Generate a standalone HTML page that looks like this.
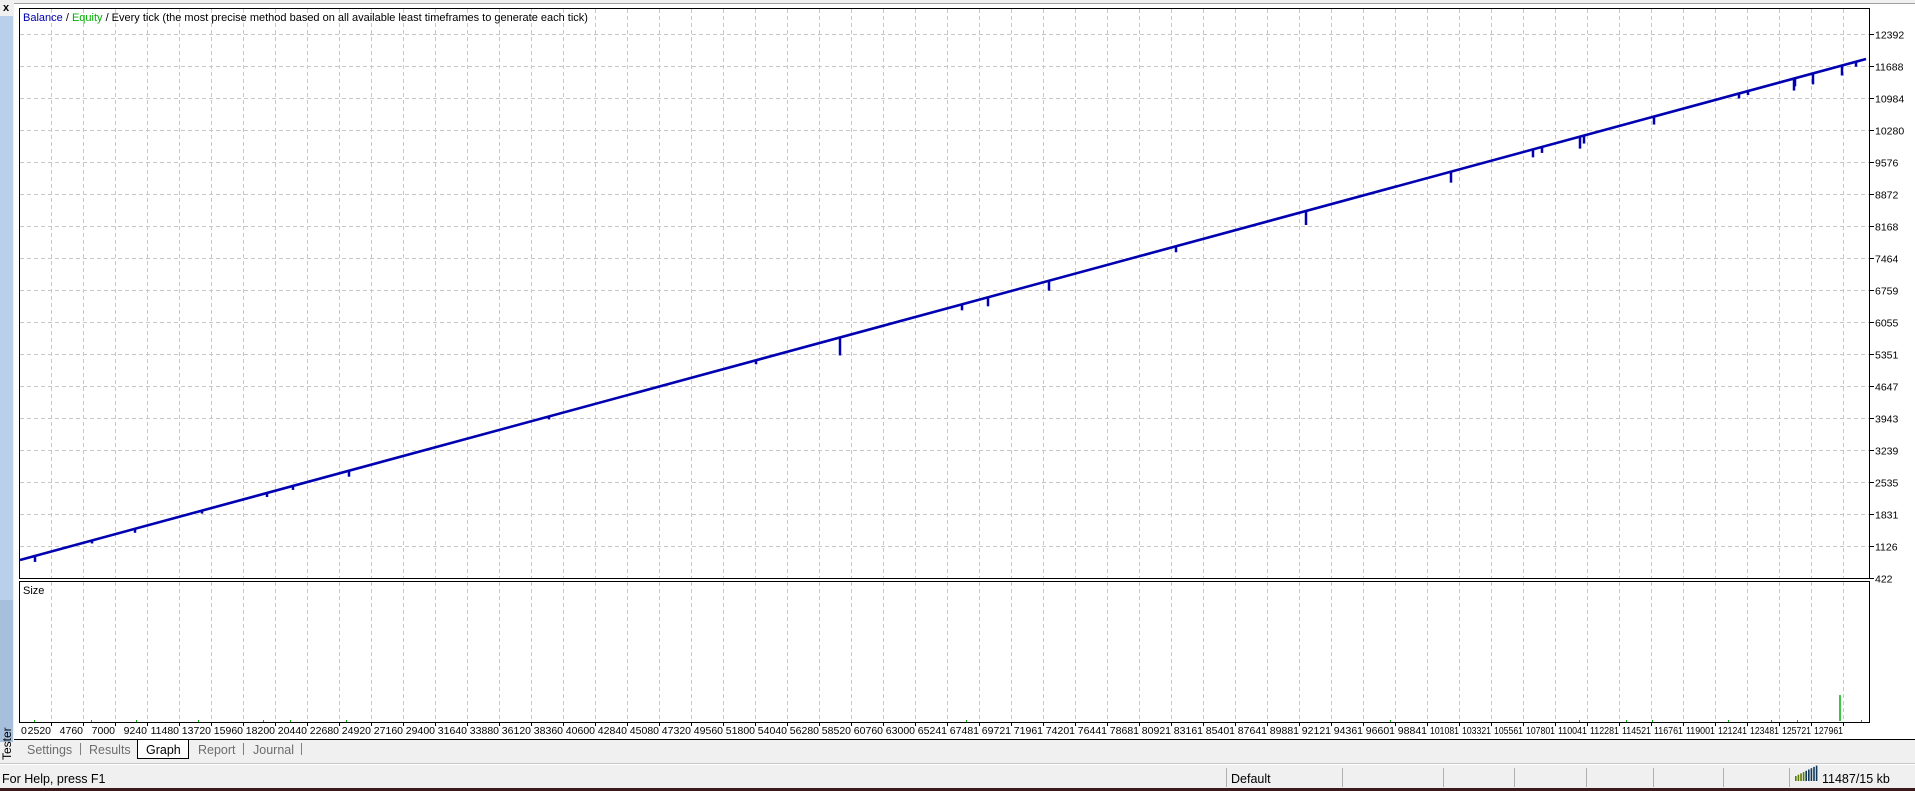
<!DOCTYPE html>
<html><head><meta charset="utf-8"><style>
html,body{margin:0;padding:0;width:1915px;height:791px;overflow:hidden;background:#f0f0f0;font-family:"Liberation Sans",sans-serif;}
svg text{font-family:"Liberation Sans",sans-serif;}
</style></head><body>
<svg id="s" width="1915" height="791" xmlns="http://www.w3.org/2000/svg" style="position:absolute;left:0;top:0">
<rect x="0" y="0" width="1915" height="791" fill="#f0f0f0"/>
<rect x="0" y="16" width="13" height="726" fill="#b9d0ea"/>
<rect x="0" y="600" width="13" height="142" fill="#a6bfdc"/>
<text x="3" y="11" font-size="11" font-weight="bold" fill="#000">x</text>
<line x1="14" y1="3.5" x2="1915" y2="3.5" stroke="#a0a0a0"/>
<rect x="14" y="4" width="1901" height="736" fill="#fff"/>
<text transform="translate(11,760) rotate(-90)" font-size="12" fill="#000">Tester</text>
<g id="grid"></g>
<rect x="19.5" y="8.5" width="1850" height="570" fill="none" stroke="#000"/>
<rect x="19.5" y="581.5" width="1850" height="141" fill="none" stroke="#000"/>
<text x="23" y="21" font-size="11"><tspan fill="#0000b0">Balance</tspan><tspan fill="#000"> / </tspan><tspan fill="#00b000">Equity</tspan><tspan fill="#000"> / Every tick (the most precise method based on all available least timeframes to generate each tick)</tspan></text>
<text x="23" y="594" font-size="11" fill="#000">Size</text>
<g id="line"></g>
<line x1="14" y1="739.5" x2="1915" y2="739.5" stroke="#000"/>
<rect x="14" y="740" width="1901" height="22" fill="#f0f0f0"/>
<path d="M137.5,740 V758.5 H188.5 V740" fill="#fff" stroke="#000"/>
<g font-size="12.5" fill="#6d6d6d">
<text x="27" y="754">Settings</text><text x="89" y="754">Results</text>
<text x="146" y="754" fill="#000">Graph</text><text x="198" y="754">Report</text><text x="253" y="754">Journal</text>
</g>
<g stroke="#808080"><line x1="80.5" y1="743" x2="80.5" y2="755"/><line x1="243.5" y1="743" x2="243.5" y2="755"/><line x1="301.5" y1="743" x2="301.5" y2="755"/></g>
<line x1="0" y1="763.5" x2="1915" y2="763.5" stroke="#c8c8c8"/>
<line x1="0" y1="764.5" x2="1915" y2="764.5" stroke="#fff"/>
<text x="2" y="783" font-size="12.5" fill="#000">For Help, press F1</text>
<text x="1231" y="783" font-size="12.5" fill="#000">Default</text>
<g stroke="#b0b0b0"><line x1="1226.5" y1="768" x2="1226.5" y2="787"/><line x1="1342.5" y1="768" x2="1342.5" y2="787"/><line x1="1443.5" y1="768" x2="1443.5" y2="787"/><line x1="1514.5" y1="768" x2="1514.5" y2="787"/><line x1="1586.5" y1="768" x2="1586.5" y2="787"/><line x1="1653.5" y1="768" x2="1653.5" y2="787"/><line x1="1723.5" y1="768" x2="1723.5" y2="787"/><line x1="1789.5" y1="768" x2="1789.5" y2="787"/></g>
<g id="ico"></g>
<text x="1822" y="783" font-size="12.5" fill="#000">11487/15 kb</text>
<rect x="0" y="788" width="1915" height="3" fill="#3a1a1a"/>
</svg>
<script>
var ns="http://www.w3.org/2000/svg";
function el(p,t,a,txt){var e=document.createElementNS(ns,t);for(var k in a)e.setAttribute(k,a[k]);if(txt!=null)e.textContent=txt;document.getElementById(p).appendChild(e);return e;}
var xl="2520 4760 7000 9240 11480 13720 15960 18200 20440 22680 24920 27160 29400 31640 33880 36120 38360 40600 42840 45080 47320 49560 51800 54040 56280 58520 60760 63000 65241 67481 69721 71961 74201 76441 78681 80921 83161 85401 87641 89881 92121 94361 96601 98841 101081 103321 105561 107801 110041 112281 114521 116761 119001 121241 123481 125721 127961".split(" ");
for(var i=0;i<57;i++){var x=51.5+32*i;
 el("grid","line",{x1:x,y1:9,x2:x,y2:578,stroke:"#c8c8c8","stroke-dasharray":"4,3"});
 el("grid","line",{x1:x,y1:582,x2:x,y2:722,stroke:"#c8c8c8","stroke-dasharray":"4,3"});
 el("grid","line",{x1:x,y1:723,x2:x,y2:726,stroke:"#000"});
 var a={x:x-0.5,y:734,"font-size":"10.5","text-anchor":"end",fill:"#000"};
 if(xl[i].length==6){a.textLength="29";a.lengthAdjust="spacingAndGlyphs";}
 el("grid","text",a,xl[i]);}
el("grid","text",{x:21,y:734,"font-size":"10.5",fill:"#000"},"0");
var yl="12392 11688 10984 10280 9576 8872 8168 7464 6759 6055 5351 4647 3943 3239 2535 1831 1126 422".split(" ");
for(var j=0;j<18;j++){var y=34.5+32*j;
 if(j<17)el("grid","line",{x1:20,y1:y,x2:1869,y2:y,stroke:"#c8c8c8","stroke-dasharray":"4,3"});
 el("grid","line",{x1:1870,y1:y,x2:1874,y2:y,stroke:"#000"});
 el("grid","text",{x:1875,y:y+4,"font-size":"10.5",fill:"#000"},yl[j]);}
function Y(x){return 560-(x-20)*(560-59)/(1866-20);}
el("line","line",{x1:20,y1:560,x2:1866,y2:59,stroke:"#0000b0","stroke-width":"2.6"});
var d=[[35,6],[92,3],[135,4],[202,3],[267,4],[293,4],[349,6],[549,3],[756,4],[840,18],[962,6],[988,9],[1049,10],[1176,6],[1306,14],[1451,11],[1533,8],[1542,6],[1580,12],[1584,8],[1654,8],[1739,5],[1748,4],[1794,12],[1795,8],[1813,11],[1842,10],[1856,5]];
d.forEach(function(p){var y=Y(p[0]);el("line","line",{x1:p[0],y1:y,x2:p[0],y2:y+p[1],stroke:"#0000b0","stroke-width":"2.5"});});
el("line","line",{x1:1840,y1:695,x2:1840,y2:721,stroke:"#00b000","stroke-width":"1.5"});
[34,91,136,198,263,290,346,966,1390,1579,1626,1652,1728,1771,1797,1861].forEach(function(x){el("line","rect",{x:x,y:720,width:1,height:2,fill:"#00b000"});});
for(var k=0;k<9;k++){var h=5+k*1.3;el("ico","rect",{x:1795+k*2.6,y:781-h,width:1.6,height:h,fill:k<4?"#5a7a00":"#103a5a"});}
</script>
</body></html>
